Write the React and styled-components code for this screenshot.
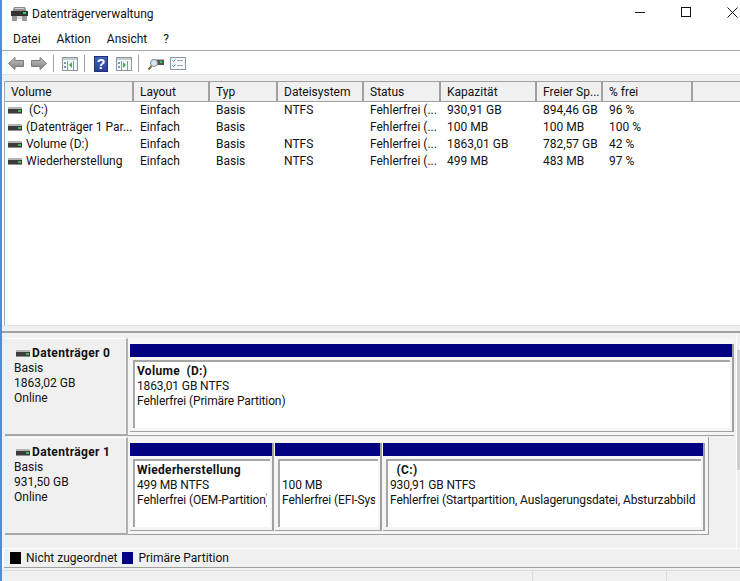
import React from "react";
import styled, { createGlobalStyle } from "styled-components";

const GlobalStyle = createGlobalStyle`
  html, body { margin: 0; padding: 0; background: #fff; }
  body { font-family: Roboto, "Open Sans", sans-serif; font-size: 12px; color: #111; }
`;

const columns = [
  { title: "Volume", width: 129 },
  { title: "Layout", width: 76 },
  { title: "Typ", width: 68 },
  { title: "Dateisystem", width: 86 },
  { title: "Status", width: 77 },
  { title: "Kapazität", width: 96 },
  { title: "Freier Sp...", width: 66 },
  { title: "% frei", width: 90 },
];

const rows = [
  ["\u00a0(C:)", "Einfach", "Basis", "NTFS", "Fehlerfrei (...", "930,91 GB", "894,46 GB", "96 %"],
  ["(Datenträger 1 Par...", "Einfach", "Basis", "", "Fehlerfrei (...", "100 MB", "100 MB", "100 %"],
  ["Volume (D:)", "Einfach", "Basis", "NTFS", "Fehlerfrei (...", "1863,01 GB", "782,57 GB", "42 %"],
  ["Wiederherstellung", "Einfach", "Basis", "NTFS", "Fehlerfrei (...", "499 MB", "483 MB", "97 %"],
];

const DriveIcon = () => (
  <svg width="14" height="7" viewBox="0 0 14 7" style={{ flex: "none" }}>
    <rect x="0" y="0" width="14" height="2" fill="#b4b4b4" />
    <rect x="0" y="2" width="14" height="4" fill="#3c3c3c" />
    <rect x="0" y="6" width="14" height="1" fill="#8f8f8f" />
    <rect x="10" y="3" width="3" height="2" fill="#35c24a" />
  </svg>
);

const AppIcon = () => (
  <svg width="17" height="14" viewBox="0 0 17 14" style={{ flex: "none" }}>
    <path d="M3 0h11l2 5H1z" fill="#8d8d8d" />
    <rect x="4" y="1" width="9" height="1" fill="#d4d4d4" />
    <rect x="0" y="4" width="17" height="5" fill="#333" />
    <rect x="12" y="5" width="3" height="2" fill="#38d05a" />
    <rect x="1" y="9" width="5" height="5" fill="#9a9a9a" />
    <rect x="11" y="9" width="5" height="5" fill="#9a9a9a" />
    <rect x="6" y="9" width="5" height="3" fill="#dcdcdc" />
  </svg>
);

const ArrowIcon = ({ right }) => (
  <svg width="16" height="13" viewBox="0 0 16 13" style={right ? { transform: "scaleX(-1)" } : undefined}>
    <defs>
      <linearGradient id="arrowFill" x1="0" y1="0" x2="0" y2="1">
        <stop offset="0" stopColor="#c4c4c4" />
        <stop offset="1" stopColor="#7e7e7e" />
      </linearGradient>
    </defs>
    <path d="M0.5 6.5 7 0.5V3.5H15.5V9.5H7V12.5z" fill="url(#arrowFill)" stroke="#7a7a7a" />
  </svg>
);

const PaneIcon = ({ play }) => (
  <svg width="16" height="14" viewBox="0 0 16 14">
    <rect x="0.5" y="0.5" width="15" height="13" fill="#f4f8fb" stroke="#8e979e" />
    <rect x="1" y="1" width="14" height="2" fill="#c2ccd4" />
    <path d="M5.5 4v9M11.5 4v9" stroke="#8e979e" />
    <rect x="2" y="5" width="2" height="2" fill="#7d95ae" />
    <rect x="2" y="9" width="2" height="2" fill="#7d95ae" />
    {play ? <path d="M7 5l3 3-3 3z" fill="#32b545" /> : <path d="M10 5v6L7 8z" fill="#32b545" />}
  </svg>
);

const HelpIcon = () => (
  <svg width="14" height="16" viewBox="0 0 14 16">
    <defs>
      <linearGradient id="helpFill" x1="0" y1="0" x2="0" y2="1">
        <stop offset="0" stopColor="#3f64c4" />
        <stop offset="1" stopColor="#2a3f90" />
      </linearGradient>
    </defs>
    <rect x="0.5" y="0.5" width="13" height="15" fill="url(#helpFill)" stroke="#1e2f78" />
    <text x="7" y="13" textAnchor="middle" fontFamily="Liberation Sans" fontWeight="700" fontSize="14" fill="#fff">?</text>
  </svg>
);

const SearchDriveIcon = () => (
  <svg width="16" height="15" viewBox="0 0 16 15">
    <rect x="4" y="3" width="12" height="6" fill="#555" />
    <rect x="4" y="3" width="12" height="1" fill="#b5b5b5" />
    <rect x="12" y="5" width="2" height="2" fill="#35d050" />
    <circle cx="6" cy="7" r="3.5" fill="#d8e6ee" stroke="#7d8a92" />
    <path d="M3.5 10 0.5 13.5" stroke="#8a6a3c" strokeWidth="2" />
  </svg>
);

const ChecklistIcon = () => (
  <svg width="16" height="13" viewBox="0 0 16 13">
    <rect x="0.5" y="0.5" width="15" height="12" fill="#f5f9fc" stroke="#8e979e" />
    <path d="M2.5 3.5l1 1 2-2M2.5 8.5l1 1 2-2" stroke="#3a78c0" fill="none" />
    <path d="M7 3.5h6M7 8.5h6" stroke="#9aa4ac" />
  </svg>
);

const Window = styled.div`
  width: 740px;
  height: 581px;
  display: flex;
  flex-direction: column;
  border-left: 2px solid #4a90d9;
  box-sizing: border-box;
  overflow: hidden;
  background: #fff;
`;

const TitleBar = styled.div`
  height: 27px;
  display: flex;
  align-items: center;
  padding-left: 9px;
  gap: 4px;
  flex: none;
`;

const TitleText = styled.span`
  flex: 1;
`;

const WindowButtons = styled.div`
  display: flex;
  align-items: center;
  margin: -3px -15px 0 0;
`;

const WindowButton = styled.div`
  width: 46px;
  height: 24px;
  display: flex;
  align-items: center;
  justify-content: center;
`;

const MenuBar = styled.div`
  height: 23px;
  display: flex;
  align-items: center;
  padding-left: 11px;
  gap: 16px;
  border-bottom: 1px solid #a8a8a8;
  flex: none;
`;

const Toolbar = styled.div`
  height: 23px;
  box-sizing: border-box;
  padding: 2px 0 0 6px;
  display: flex;
  align-items: center;
  flex: none;
`;

const ToolButton = styled.div`
  display: flex;
  align-items: center;
  margin-right: ${(p) => p.$gap ?? 7}px;
`;

const ToolSeparator = styled.div`
  width: 1px;
  height: 17px;
  background: #a0a0a0;
  margin-right: ${(p) => p.$gap ?? 8}px;
`;

const Strip = styled.div`
  height: 6px;
  background: #f0f0f0;
  border-top: 1px solid #e2e2e2;
  flex: none;
`;

const ListPane = styled.div`
  height: 243px;
  margin-left: 2px;
  border-top: 1px solid #a0a0a0;
  border-left: 1px solid #a8a8a8;
  flex: none;
  overflow: hidden;
`;

const HeaderRow = styled.div`
  display: flex;
  height: 20px;
  box-sizing: border-box;
  background: #f0f0f0;
  border-bottom: 1px solid #a0a0a0;
`;

const HeaderCell = styled.div`
  width: ${(p) => p.$width}px;
  flex: none;
  box-sizing: border-box;
  padding-left: 6px;
  line-height: 20px;
  border-right: 2px solid #a0a0a0;
  white-space: nowrap;
`;

const HeaderFill = styled.div`
  flex: 1;
`;

const DataRow = styled.div`
  display: flex;
  height: 17px;
  line-height: 15px;
`;

const DataCell = styled.div`
  width: ${(p) => p.$width}px;
  flex: none;
  box-sizing: border-box;
  padding-left: ${(p) => (p.$first ? 3 : 6)}px;
  white-space: nowrap;
  overflow: hidden;
  display: flex;
  align-items: center;
  gap: 4px;
`;

const Splitter = styled.div`
  height: 5px;
  background: #f0f0f0;
  border-top: 1px solid #e2e2e2;
  border-bottom: 2px solid #a0a0a0;
  flex: none;
`;

const DiskPane = styled.div`
  flex: 1;
  background: #f0f0f0;
  display: flex;
  min-height: 0;
`;

const DiskList = styled.div`
  flex: 1;
  min-width: 0;
  padding: 5px 0 0 3px;
`;

const ScrollTrack = styled.div`
  width: 3px;
  flex: none;
  border-left: 1px solid #fff;
  padding-top: 17px;
`;

const ScrollThumb = styled.div`
  height: 120px;
  background: #cdcdcd;
`;

const DiskRow = styled.div`
  display: flex;
  align-items: flex-start;
  height: 99px;
`;

const DiskInfo = styled.div`
  width: 123px;
  height: 98px;
  flex: none;
  box-sizing: border-box;
  padding: 7px 0 0 9px;
  line-height: 15px;
  border-right: 2px solid #b0b0b0;
  border-bottom: 2px solid #a8a8a8;
  border-top: 1px solid #fff;
`;

const DiskName = styled.div`
  display: flex;
  align-items: center;
  gap: 2px;
  font-weight: 700;
  letter-spacing: 0.35px;
`;

const DiskIconBox = styled.span`
  display: flex;
  margin-left: 2px;
`;

const Partitions = styled.div`
  width: ${(p) => p.$width}px;
  height: 98px;
  flex: none;
  box-sizing: border-box;
  padding: 6px ${(p) => (p.$framed ? 3 : 0)}px 3px 2px;
  display: flex;
  gap: 1px;
  border-right: ${(p) => (p.$framed ? "1px solid #a0a0a0" : "none")};
  border-bottom: 1px solid #a0a0a0;
  background: #f5f5f5;
`;

const Partition = styled.div`
  width: ${(p) => p.$width}px;
  height: 88px;
  box-sizing: border-box;
  display: flex;
  flex-direction: column;
  flex: none;
  border-right: 2px solid #a0a0a0;
  border-bottom: 1px solid #a0a0a0;
`;

const PartitionBar = styled.div`
  height: 13px;
  background: #000080;
  flex: none;
`;

const PartitionBody = styled.div`
  height: 68px;
  flex: none;
  margin: 3px 2px 0 3px;
  background: #fff;
  border-left: 2px solid #a6a6a6;
  border-top: 2px solid #a6a6a6;
  box-sizing: border-box;
  padding: 2px 3px 0 2px;
  line-height: 15px;
`;

const PartitionName = styled.div`
  font-weight: 700;
  height: 15px;
  letter-spacing: 0.3px;
`;

const ClippedLine = styled.div`
  overflow: hidden;
  white-space: nowrap;
  letter-spacing: -0.12px;
`;

const Legend = styled.div`
  height: 20px;
  box-sizing: border-box;
  margin-left: 2px;
  display: flex;
  align-items: center;
  flex: none;
  background: #f0f0f0;
  border-top: 1px solid #fff;
  border-bottom: 1px solid #a0a0a0;
  padding-left: 6px;
  gap: 5px;
`;

const LegendSwatch = styled.span`
  width: 11px;
  height: 12px;
  background: ${(p) => p.$color};
`;

const StatusBar = styled.div`
  height: 13px;
  box-sizing: border-box;
  flex: none;
  padding-top: 2px;
  background: #f0f0f0;
`;

const StatusInner = styled.div`
  height: 100%;
  display: flex;
  justify-content: flex-end;
  border-top: 1px solid #dcdcdc;
`;

const StatusCell = styled.div`
  width: ${(p) => p.$width}px;
  border-left: 1px solid #dcdcdc;
`;

const PartitionBlock = ({ name, size, state, width }) => (
  <Partition $width={width}>
    <PartitionBar />
    <PartitionBody>
      <PartitionName>{name}</PartitionName>
      <ClippedLine>{size}</ClippedLine>
      <ClippedLine>{state}</ClippedLine>
    </PartitionBody>
  </Partition>
);

const Disk = ({ name, capacity, width, framed, children }) => (
  <DiskRow>
    <DiskInfo>
      <DiskName>
        <DiskIconBox>
          <DriveIcon />
        </DiskIconBox>
        {name}
      </DiskName>
      <div>Basis</div>
      <div>{capacity}</div>
      <div>Online</div>
    </DiskInfo>
    <Partitions $width={width} $framed={framed}>{children}</Partitions>
  </DiskRow>
);

export default function App() {
  return (
    <>
      <GlobalStyle />
      <Window>
        <TitleBar>
          <AppIcon />
          <TitleText>Datenträgerverwaltung</TitleText>
          <WindowButtons>
            <WindowButton>
              <svg width="11" height="11" viewBox="0 0 11 11"><path d="M0 5.5h10" stroke="#111" /></svg>
            </WindowButton>
            <WindowButton>
              <svg width="11" height="11" viewBox="0 0 11 11"><rect x="0.5" y="0.5" width="9" height="9" fill="none" stroke="#111" /></svg>
            </WindowButton>
            <WindowButton>
              <svg width="11" height="11" viewBox="0 0 11 11"><path d="M0.5 0.5l10 10M10.5 0.5l-10 10" stroke="#111" /></svg>
            </WindowButton>
          </WindowButtons>
        </TitleBar>
        <MenuBar>
          <span>Datei</span>
          <span>Aktion</span>
          <span>Ansicht</span>
          <span>?</span>
        </MenuBar>
        <Toolbar>
          <ToolButton><ArrowIcon /></ToolButton>
          <ToolButton $gap={6}><ArrowIcon right /></ToolButton>
          <ToolSeparator />
          <ToolButton $gap={6}><PaneIcon /></ToolButton>
          <ToolSeparator $gap={9} />
          <ToolButton $gap={8}><HelpIcon /></ToolButton>
          <ToolButton $gap={6}><PaneIcon play /></ToolButton>
          <ToolSeparator $gap={9} />
          <ToolButton $gap={6}><SearchDriveIcon /></ToolButton>
          <ToolButton><ChecklistIcon /></ToolButton>
        </Toolbar>
        <Strip />
        <ListPane>
          <HeaderRow>
            {columns.map((c) => (
              <HeaderCell key={c.title} $width={c.width}>{c.title}</HeaderCell>
            ))}
            <HeaderFill />
          </HeaderRow>
          {rows.map((r) => (
            <DataRow key={r[0]}>
              {r.map((value, i) => (
                <DataCell key={i} $width={columns[i].width} $first={i === 0}>
                  {i === 0 && <DriveIcon />}
                  <span>{value}</span>
                </DataCell>
              ))}
            </DataRow>
          ))}
        </ListPane>
        <Splitter />
        <DiskPane>
          <DiskList>
            <Disk name="Datenträger 0" capacity="1863,02 GB" width={606}>
              <PartitionBlock name={"Volume\u00a0\u00a0(D:)"} size="1863,01 GB NTFS" state="Fehlerfrei (Primäre Partition)" width={604} />
            </Disk>
            <Disk name="Datenträger 1" capacity="931,50 GB" width={581} framed>
              <PartitionBlock name="Wiederherstellung" size="499 MB NTFS" state="Fehlerfrei (OEM-Partition)" width={144} />
              <PartitionBlock name="" size="100 MB" state="Fehlerfrei (EFI-System)" width={107} />
              <PartitionBlock name={"\u00a0\u00a0(C:)"} size="930,91 GB NTFS" state="Fehlerfrei (Startpartition, Auslagerungsdatei, Absturzabbild" width={322} />
            </Disk>
          </DiskList>
          <ScrollTrack>
            <ScrollThumb />
          </ScrollTrack>
        </DiskPane>
        <Legend>
          <LegendSwatch $color="#000" />
          <span>Nicht zugeordnet</span>
          <LegendSwatch $color="#000080" />
          <span>Primäre Partition</span>
        </Legend>
        <StatusBar>
          <StatusInner>
            <StatusCell $width={133} />
            <StatusCell $width={73} />
          </StatusInner>
        </StatusBar>
      </Window>
    </>
  );
}
